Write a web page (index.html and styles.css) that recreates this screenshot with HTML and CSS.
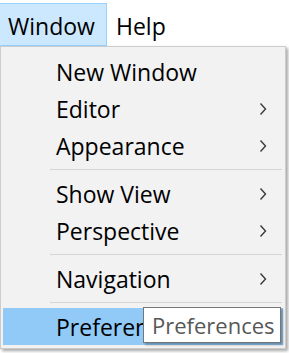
FILE: index.html
```html
<!DOCTYPE html>
<html>
<head>
<meta charset="utf-8">
<link rel="stylesheet" href="styles.css">
</head>
<body>
<div class="menubar">
  <div class="mb-item active">Window</div>
  <div class="mb-item">Help</div>
</div>
<div class="menu">
  <div class="item"><span class="label">New Window</span></div>
  <div class="item"><span class="label">Editor</span><svg class="chev" width="8" height="14" viewBox="0 0 8 14"><polyline points="1.5,1.5 6.5,7 1.5,12.5" fill="none" stroke="#3a3a3a" stroke-width="1.4"/></svg></div>
  <div class="item"><span class="label">Appearance</span><svg class="chev" width="8" height="14" viewBox="0 0 8 14"><polyline points="1.5,1.5 6.5,7 1.5,12.5" fill="none" stroke="#3a3a3a" stroke-width="1.4"/></svg></div>
  <div class="sep"></div>
  <div class="item"><span class="label">Show View</span><svg class="chev" width="8" height="14" viewBox="0 0 8 14"><polyline points="1.5,1.5 6.5,7 1.5,12.5" fill="none" stroke="#3a3a3a" stroke-width="1.4"/></svg></div>
  <div class="item"><span class="label">Perspective</span><svg class="chev" width="8" height="14" viewBox="0 0 8 14"><polyline points="1.5,1.5 6.5,7 1.5,12.5" fill="none" stroke="#3a3a3a" stroke-width="1.4"/></svg></div>
  <div class="sep"></div>
  <div class="item"><span class="label">Navigation</span><svg class="chev" width="8" height="14" viewBox="0 0 8 14"><polyline points="1.5,1.5 6.5,7 1.5,12.5" fill="none" stroke="#3a3a3a" stroke-width="1.4"/></svg></div>
  <div class="sep"></div>
  <div class="item selected"><span class="label">Preferences</span></div>
  <div class="tooltip">Preferences</div>
</div>
</body>
</html>
```

FILE: styles.css
```css
* { box-sizing: border-box; }
html, body { margin: 0; padding: 0; background: #ffffff; }
body {
  width: 289px;
  height: 353px;
  overflow: hidden;
  font-family: "Open Sans", "Noto Sans", sans-serif;
  font-size: 23px;
  color: #000;
}
.menubar {
  display: flex;
  height: 46px;
  padding-top: 3px;
}
.mb-item {
  display: flex;
  align-items: center;
  height: 43px;
  padding: 3px 9px 0 8px;
  border: 1px solid transparent;
}
.mb-item.active {
  background: #cce8ff;
  border-color: #99d1ff;
  margin-left: -1px;
  width: 108px;
}
.menu {
  position: relative;
  width: 286px;
  height: 303px;
  background: #f2f2f2;
  border: 1px solid #cccccc;
  padding: 6px 2px 3px 2px;
  box-shadow: 2px 2px 3px rgba(0, 0, 0, 0.35);
}
.item {
  display: flex;
  align-items: center;
  justify-content: space-between;
  height: 37px;
  padding: 1px 16px 0 53px;
}
.item.selected {
  background: #91c9f7;
}
.chev { display: block; }
.sep {
  height: 11px;
  padding-top: 5px;
  margin: 0 1px 0 47px;
}
.sep::before {
  content: "";
  display: block;
  height: 1px;
  background: #d5d5d5;
}
.tooltip {
  position: absolute;
  left: 142px;
  top: 260px;
  width: 138px;
  height: 36px;
  background: #ffffff;
  border: 1px solid #767676;
  color: #575757;
  font-size: 22px;
  padding-left: 8px;
  display: flex;
  align-items: center;
  box-shadow: 2px 2px 2px rgba(0, 0, 0, 0.3);
}
```
